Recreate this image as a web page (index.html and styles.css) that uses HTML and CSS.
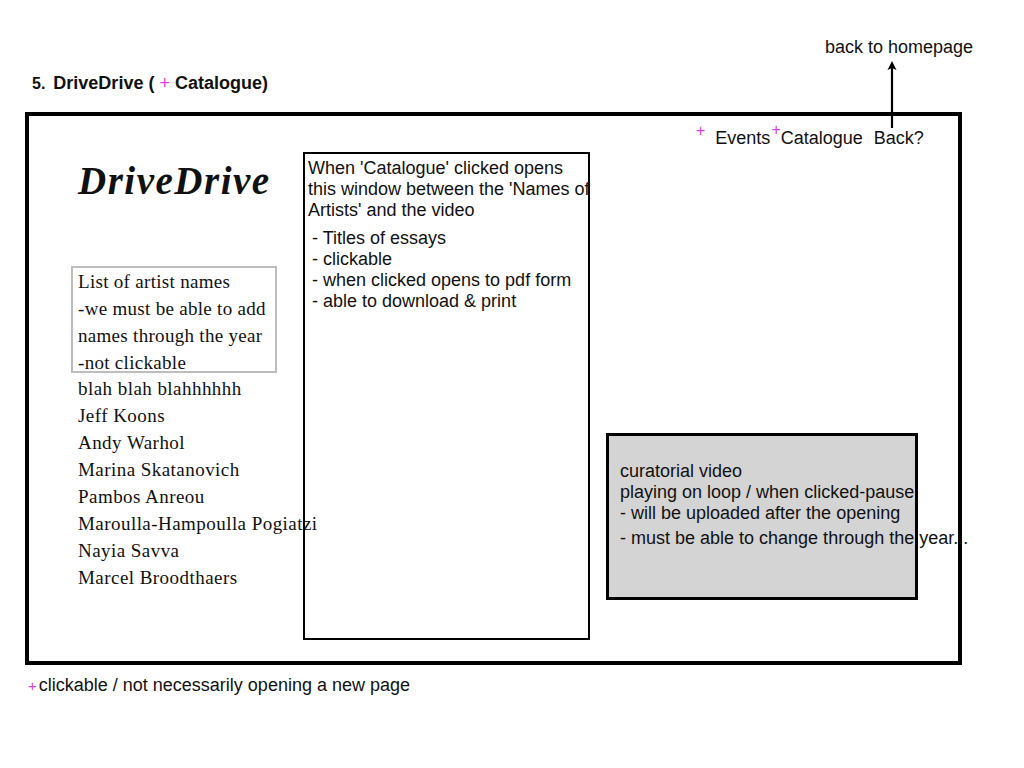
FILE: index.html
```html
<!DOCTYPE html>
<html>
<head>
<meta charset="utf-8">
<link rel="stylesheet" href="styles.css">
</head>
<body>
<div class="page">
  <div class="home">back to homepage</div>
  <div class="title"><span class="num">5.</span> DriveDrive ( <span class="plus">+</span> Catalogue)</div>
  <div class="frame">
    <div class="col-left">
      <div class="logo">DriveDrive</div>
      <div class="note-box">
        <div>List of artist names</div>
        <div>-we must be able to add</div>
        <div>names through the year</div>
        <div>-not clickable</div>
      </div>
      <ul class="names">
        <li>blah blah blahhhhhh</li>
        <li>Jeff Koons</li>
        <li>Andy Warhol</li>
        <li>Marina Skatanovich</li>
        <li>Pambos Anreou</li>
        <li>Maroulla-Hampoulla Pogiatzi</li>
        <li>Nayia Savva</li>
        <li>Marcel Broodthaers</li>
      </ul>
    </div>
    <div class="catalogue">
      <p class="cat-intro">When 'Catalogue' clicked opens<br>this window between the 'Names of<br>Artists' and the video</p>
      <ul class="cat-list">
        <li>- Titles of essays</li>
        <li>- clickable</li>
        <li>- when clicked opens to pdf form</li>
        <li>- able to download &amp; print</li>
      </ul>
    </div>
    <div class="col-right">
      <nav class="nav">
        <span class="nav-plus">+</span><span class="nav-item">Events</span><span class="nav-plus2">+</span><span class="nav-item">Catalogue</span><span class="nav-item back">Back?</span>
      </nav>
      <div class="video">
        <div>curatorial video</div>
        <div class="nowrap">playing on loop / when clicked-pause</div>
        <div>- will be uploaded after the opening</div>
        <div class="nowrap last">- must be able to change through the year...</div>
      </div>
    </div>
    <svg class="arrow" width="12" height="70" viewBox="0 0 12 70">
      <line x1="6" y1="6" x2="6" y2="68" stroke="#000" stroke-width="2.2"/>
      <path d="M6 1 L10.5 10 L6 8 L1.5 10 Z" fill="#000"/>
    </svg>
  </div>
  <div class="legend"><span class="plus legend-plus">+</span>clickable / not necessarily opening a new page</div>
</div>
</body>
</html>
```

FILE: styles.css
```css
html, body {
  margin: 0;
  padding: 0;
  background: #fff;
}

body {
  font-family: "Liberation Sans", Arial, sans-serif;
  font-size: 18px;
  color: #111;
}

.page {
  padding-left: 25px;
  width: 999px;
}

.home {
  margin-left: 800px;
  padding-top: 37px;
  line-height: 21px;
  white-space: nowrap;
}

.title {
  margin-top: 15px;
  padding-left: 7px;
  font-weight: bold;
  line-height: 21px;
}

.title .num {
  font-size: 16px;
  margin-right: 3px;
}

.plus {
  color: #dd40dc;
  font-weight: normal;
}

.frame {
  position: relative;
  margin-top: 18px;
  width: 937px;
  height: 553px;
  box-sizing: border-box;
  border: 4px solid #000;
  display: grid;
  grid-template-columns: 274px 287px 1fr;
  align-items: start;
}

.col-left {
  padding-left: 42px;
}

.logo {
  margin-top: 46px;
  margin-left: 7px;
  font-family: "Liberation Serif", "Times New Roman", serif;
  font-weight: bold;
  font-style: italic;
  font-size: 39px;
  letter-spacing: 1.5px;
  line-height: 38px;
  white-space: nowrap;
}

.note-box {
  margin-top: 66px;
  width: 206px;
  height: 107px;
  box-sizing: border-box;
  border: 2px solid #bdbdbd;
  padding-left: 5px;
  font-family: "Liberation Serif", "Times New Roman", serif;
  font-size: 19px;
  letter-spacing: 0.3px;
  line-height: 27px;
  white-space: nowrap;
}

.names {
  list-style: none;
  margin: 1.5px 0 0 0;
  padding: 0 0 0 7px;
  font-family: "Liberation Serif", "Times New Roman", serif;
  font-size: 19px;
  letter-spacing: 0.45px;
  line-height: 27px;
  white-space: nowrap;
}

.catalogue {
  margin-top: 36px;
  height: 488px;
  width: 287px;
  box-sizing: border-box;
  border: 2px solid #000;
  padding: 4px 0 0 3px;
  line-height: 21px;
}

.cat-intro {
  margin: 0;
  white-space: nowrap;
}

.cat-list {
  list-style: none;
  margin: 7px 0 0 0;
  padding-left: 4px;
}

.col-right {
  display: flex;
  flex-direction: column;
}

.nav {
  margin-top: 7px;
  margin-left: 106px;
  line-height: 21px;
  white-space: nowrap;
  display: flex;
  align-items: flex-start;
}

.nav-plus,
.nav-plus2 {
  color: #dd40dc;
  font-size: 16px;
  line-height: 16px;
}

.nav-plus {
  margin-top: 0px;
  margin-right: 10px;
}

.nav-plus2 {
  margin-top: -1px;
  margin-left: 1px;
}

.nav-item {
  margin-top: 5px;
}

.back {
  margin-left: 11px;
}

.video {
  margin-top: 284px;
  margin-left: 16px;
  width: 312px;
  height: 167px;
  box-sizing: border-box;
  border: 3px solid #000;
  background: #d4d4d4;
  padding: 25px 0 0 11px;
  line-height: 21px;
}

.nowrap {
  white-space: nowrap;
}

.video .last {
  margin-top: 4px;
}

.arrow {
  position: absolute;
  left: 857px;
  top: -56px;
}

.legend {
  margin-top: 10px;
  padding-left: 3px;
  line-height: 21px;
  white-space: nowrap;
}

.legend-plus {
  font-size: 15px;
  margin-right: 2px;
}
```
